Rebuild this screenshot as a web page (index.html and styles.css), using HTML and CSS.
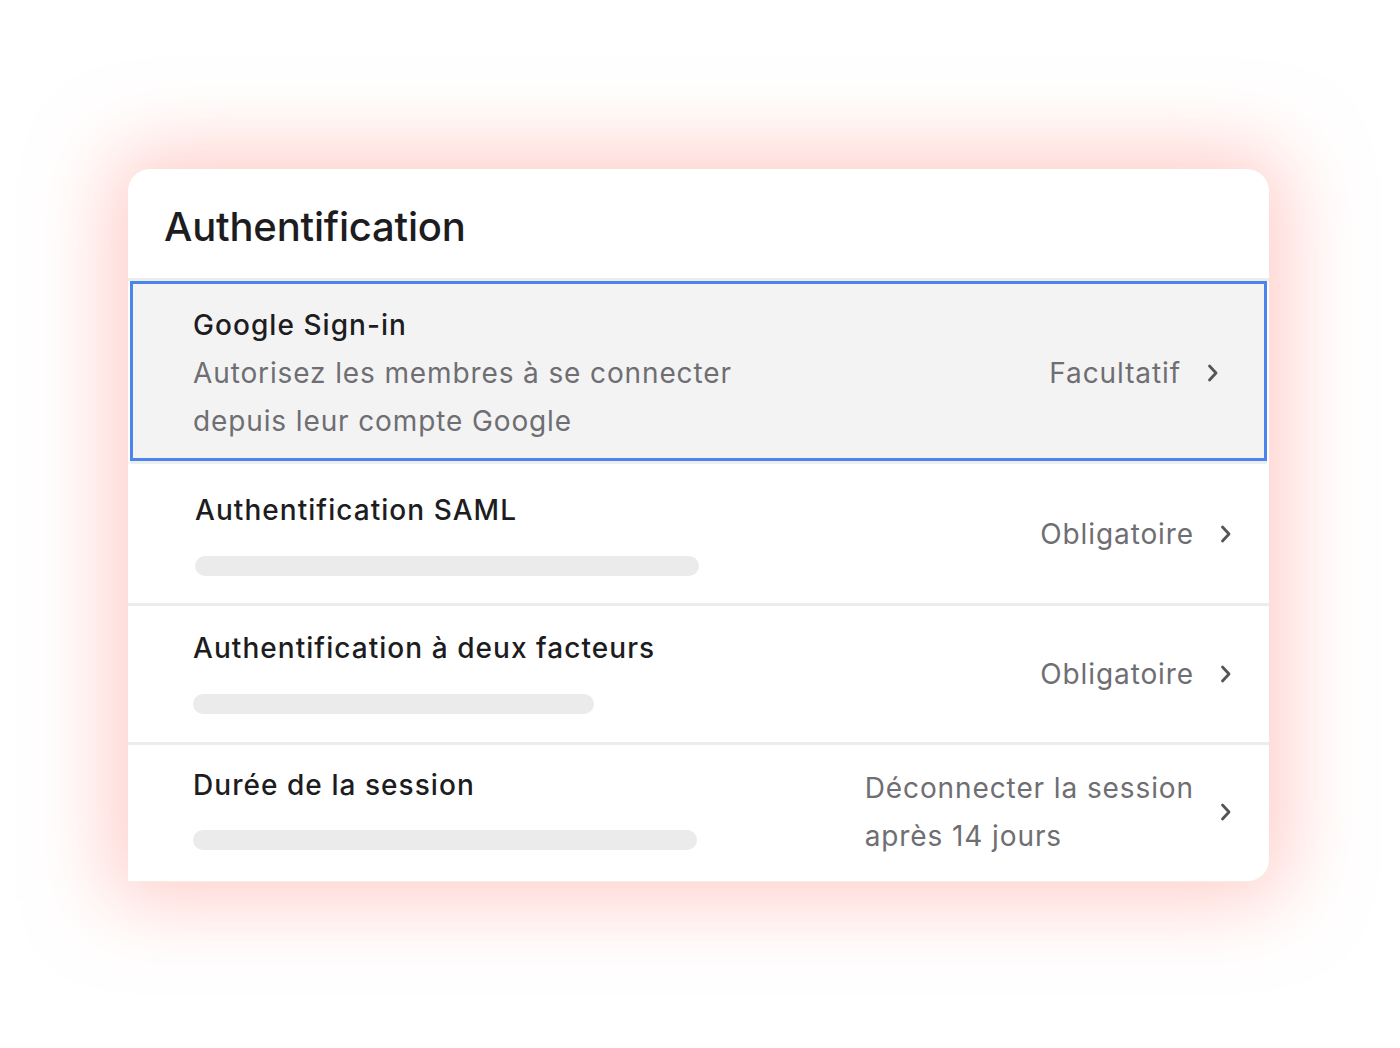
FILE: index.html
```html
<!DOCTYPE html>
<html lang="fr">
<head>
<meta charset="utf-8">
<title>Authentification</title>
<link rel="stylesheet" href="styles.css">
</head>
<body>
<main class="page">
  <section class="card">
    <h1 class="card-title">Authentification</h1>
    <div class="row row-selected">
      <div class="row-main">
        <div class="row-title">Google Sign-in</div>
        <div class="row-desc">Autorisez les membres à se connecter<br>depuis leur compte Google</div>
      </div>
      <div class="row-side">
        <span class="row-value">Facultatif</span>
        <svg class="chev" width="12" height="20" viewBox="0 0 12 20"><path d="M2.5 3 L9 10 L2.5 17" fill="none" stroke="#555557" stroke-width="2.8" stroke-linecap="round" stroke-linejoin="round"/></svg>
      </div>
    </div>
    <div class="row row-saml">
      <div class="row-main">
        <div class="row-title">Authentification SAML</div>
        <div class="skeleton w-saml"></div>
      </div>
      <div class="row-side">
        <span class="row-value">Obligatoire</span>
        <svg class="chev" width="12" height="20" viewBox="0 0 12 20"><path d="M2.5 3 L9 10 L2.5 17" fill="none" stroke="#555557" stroke-width="2.8" stroke-linecap="round" stroke-linejoin="round"/></svg>
      </div>
    </div>
    <div class="row row-2fa">
      <div class="row-main">
        <div class="row-title">Authentification à deux facteurs</div>
        <div class="skeleton w-2fa"></div>
      </div>
      <div class="row-side">
        <span class="row-value">Obligatoire</span>
        <svg class="chev" width="12" height="20" viewBox="0 0 12 20"><path d="M2.5 3 L9 10 L2.5 17" fill="none" stroke="#555557" stroke-width="2.8" stroke-linecap="round" stroke-linejoin="round"/></svg>
      </div>
    </div>
    <div class="row row-session">
      <div class="row-main">
        <div class="row-title">Durée de la session</div>
        <div class="skeleton w-session"></div>
      </div>
      <div class="row-side">
        <span class="row-value">Déconnecter la session<br>après 14 jours</span>
        <svg class="chev" width="12" height="20" viewBox="0 0 12 20"><path d="M2.5 3 L9 10 L2.5 17" fill="none" stroke="#555557" stroke-width="2.8" stroke-linecap="round" stroke-linejoin="round"/></svg>
      </div>
    </div>
  </section>
</main>
</body>
</html>
```

FILE: styles.css
```css
* { box-sizing: border-box; }
html, body { margin: 0; padding: 0; background: #ffffff; }
body {
  font-family: Inter, "Noto Sans", "Liberation Sans", sans-serif;
  color: #1d1d1f;
  width: 1400px;
  height: 1048px;
  overflow: hidden;
}
.page {
  padding: 169px 0 0 128px;
}
.card {
  width: 1141px;
  height: 713px;
  background: #ffffff;
  border-radius: 22px 22px 22px 0;
  box-shadow: 0 0 80px 18px rgba(255, 160, 150, 0.52);
  border-bottom: 1px solid #f6ece6;
  overflow: hidden;
  display: flex;
  flex-direction: column;
}
.card-title {
  margin: 0;
  height: 112px;
  padding: 34px 0 0 36px;
  font-size: 40px;
  font-weight: 500;
  line-height: 48px;
  letter-spacing: -0.2px;
  color: #1d1d1f;
  border-bottom: 3px solid #ececec;
}
.row {
  display: flex;
  justify-content: space-between;
  align-items: center;
  padding: 0 37px 0 65px;
  border-top: 3px solid #ececec;
}
.row-selected {
  flex: none;
  height: 180px;
  margin: 0 2px 3px;
  padding: 0 45px 0 60px;
  background: #f3f3f4;
  border: 3px solid #4a84ec;
  box-shadow: 0 3px 0 #eeeeee;
}
.row-saml {
  border-top: 0;
  height: 139px;
  padding-left: 67px;
}
.row-2fa { height: 139px; }
.row-session { height: 136px; flex: none; }
.row-main {
  display: flex;
  flex-direction: column;
  align-self: flex-start;
  padding-top: 17px;
}
.row-saml .row-main { padding-top: 22px; }
.row-2fa .row-main { padding-top: 18px; }
.row-session .row-main { padding-top: 16px; }
.row-title {
  font-size: 28px;
  font-weight: 500;
  line-height: 48px;
  color: #1d1d1f;
  letter-spacing: 1.05px;
}
.row-desc {
  font-size: 28px;
  font-weight: 400;
  line-height: 48px;
  color: #6e6e73;
  letter-spacing: 0.88px;
}
.skeleton {
  margin-top: 22px;
  height: 20px;
  border-radius: 10px;
  background: #ebebeb;
}
.row-session .skeleton { margin-top: 21px; }
.w-saml { width: 504px; }
.w-2fa { width: 401px; }
.w-session { width: 504px; }
.row-side {
  display: flex;
  align-items: center;
  gap: 26px;
}
.row-selected .row-side { padding-top: 4px; }
.row-value {
  font-size: 28px;
  line-height: 48px;
  color: #6e6e73;
  letter-spacing: 0.9px;
}
.chev { display: block; }
```
